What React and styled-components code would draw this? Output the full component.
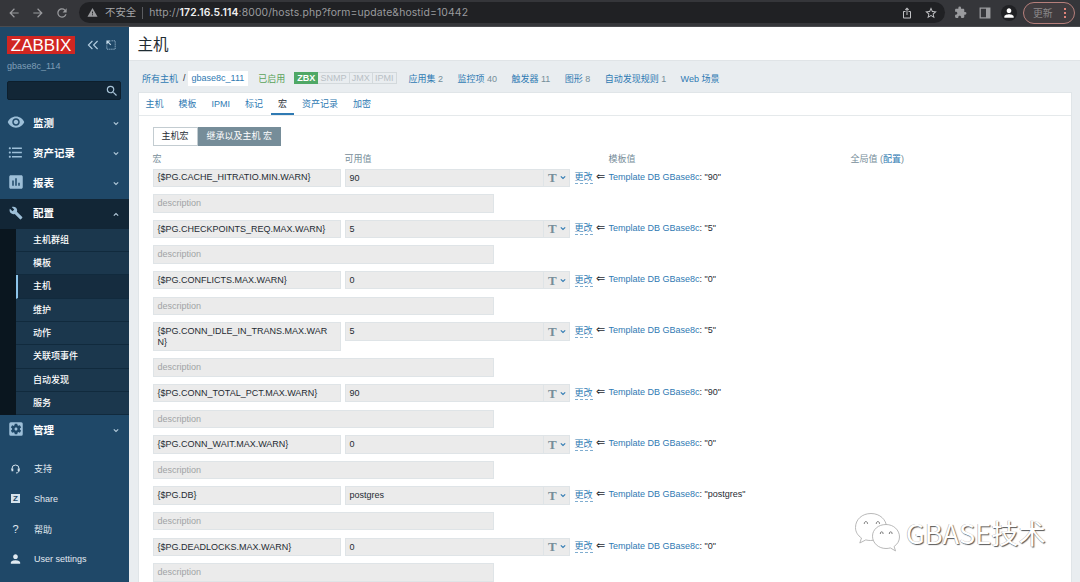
import React from 'react';
import styled, { createGlobalStyle } from 'styled-components';
import {
  MdArrowBack,
  MdArrowForward,
  MdAssessment,
  MdBuild,
  MdExtension,
  MdFormatListBulleted,
  MdIosShare,
  MdPerson,
  MdRefresh,
  MdSearch,
  MdSettingsApplications,
  MdStarBorder,
  MdVisibility,
  MdWarning,
} from 'react-icons/md';

const templateName = 'Template DB GBase8c';

const macros = [
  { name: '{$PG.CACHE_HITRATIO.MIN.WARN}', value: '90' },
  { name: '{$PG.CHECKPOINTS_REQ.MAX.WARN}', value: '5' },
  { name: '{$PG.CONFLICTS.MAX.WARN}', value: '0' },
  { name: '{$PG.CONN_IDLE_IN_TRANS.MAX.WARN}', value: '5' },
  { name: '{$PG.CONN_TOTAL_PCT.MAX.WARN}', value: '90' },
  { name: '{$PG.CONN_WAIT.MAX.WARN}', value: '0' },
  { name: '{$PG.DB}', value: 'postgres' },
  { name: '{$PG.DEADLOCKS.MAX.WARN}', value: '0' },
];

const submenu = ['主机群组', '模板', '主机', '维护', '动作', '关联项事件', '自动发现', '服务'];

const tabs = ['主机', '模板', 'IPMI', '标记', '宏', '资产记录', '加密'];

const counters = [
  { label: '应用集', count: 2 },
  { label: '监控项', count: 40 },
  { label: '触发器', count: 11 },
  { label: '图形', count: 8 },
  { label: '自动发现规则', count: 1 },
  { label: 'Web 场景' },
];

export default function App() {
  return (
    <>
      <GlobalStyle />
      <Window>
        <BrowserBar />
        <Body>
          <Sidebar />
          <Main>
            <PageHeader>主机</PageHeader>
            <HostNav />
            <Panel>
              <Tabs>
                {tabs.map((tab) => (
                  <Tab key={tab} $active={tab === '宏'}>
                    {tab}
                  </Tab>
                ))}
              </Tabs>
              <Segments>
                <Segment>主机宏</Segment>
                <Segment $active>继承以及主机 宏</Segment>
              </Segments>
              <MacroHead>
                <NameCol>宏</NameCol>
                <ValueHead>可用值</ValueHead>
                <TemplateHead>模板值</TemplateHead>
                <span>
                  全局值 (<Link>配置</Link>)
                </span>
              </MacroHead>
              {macros.map((macro) => (
                <MacroRow key={macro.name} {...macro} />
              ))}
            </Panel>
          </Main>
        </Body>
        <Watermark />
      </Window>
    </>
  );
}

function BrowserBar() {
  return (
    <Chrome>
      <NavButtons>
        <MdArrowBack />
        <MdArrowForward />
        <MdRefresh />
      </NavButtons>
      <AddressBar>
        <MdWarning size={11} />
        <Insecure>不安全</Insecure>
        <Url>
          http://<b>172.16.5.114</b>:8000/hosts.php?form=update&amp;hostid=10442
        </Url>
        <AddressIcons>
          <MdIosShare size={12} />
          <MdStarBorder size={14} />
        </AddressIcons>
      </AddressBar>
      <Extensions>
        <MdExtension size={13} />
        <svg width="12" height="12" viewBox="0 0 12 12">
          <path d="M1.2 1.2h9.6v9.6H1.2z" fill="none" stroke="#9a9b9e" strokeWidth="1.3" />
          <path d="M7 1h4v10H7z" fill="#9a9b9e" />
        </svg>
        <Avatar>
          <MdPerson size={14} />
        </Avatar>
      </Extensions>
      <UpdateButton>
        更新
        <Dots>
          <i />
          <i />
          <i />
        </Dots>
      </UpdateButton>
    </Chrome>
  );
}

function Sidebar() {
  return (
    <Aside>
      <LogoRow>
        <Logo>ZABBIX</Logo>
        <svg width="12" height="10" viewBox="0 0 12 10">
          <path d="M5.4 1 1.4 5l4 4M10.6 1l-4 4 4 4" fill="none" stroke="#b5cfe2" strokeWidth="1.1" />
        </svg>
        <svg width="10" height="10" viewBox="0 0 10 10">
          <path d="M5.5.8h3.7v8.4H.8V5.5" fill="none" stroke="#8cabc2" strokeWidth="1" strokeDasharray="1.4 .7" />
          <path d="M1 4.3V1h3.300M1.200 1.200l3.600 3.600" fill="none" stroke="#c6dbe9" strokeWidth="1.200" />
        </svg>
      </LogoRow>
      <ServerName>gbase8c_114</ServerName>
      <SearchBox>
        <MdSearch size={14} />
      </SearchBox>
      <MenuItem icon={<MdVisibility size={18} />} label="监测" />
      <MenuItem icon={<MdFormatListBulleted size={17} />} label="资产记录" />
      <MenuItem icon={<MdAssessment size={18} />} label="报表" />
      <MenuItem icon={<MdBuild size={14} />} label="配置" open />
      <Submenu>
        {submenu.map((item) => (
          <SubmenuItem key={item} $active={item === '主机'}>
            {item}
          </SubmenuItem>
        ))}
      </Submenu>
      <MenuItem icon={<MdSettingsApplications size={18} />} label="管理" />
      <UserMenu>
        <UserItem>
          <svg width="10" height="10" viewBox="0 0 10 10">
            <path d="M1.500 6V4.500a3.500 3.500 0 0 1 7 0V6c0 2-1 3-3 3" fill="none" stroke="#d5e3ed" />
            <path d="M1 4.500h1.800v2.800H1zM7.200 4.500H9v2.800H7.200z" fill="#d5e3ed" />
          </svg>
          支持
        </UserItem>
        <UserItem>
          <ShareIcon>Z</ShareIcon>
          Share
        </UserItem>
        <UserItem>
          <HelpIcon>?</HelpIcon>
          帮助
        </UserItem>
        <UserItem>
          <MdPerson size={14} />
          User settings
        </UserItem>
      </UserMenu>
    </Aside>
  );
}

function MenuItem({ icon, label, open }) {
  return (
    <StyledMenuItem $open={open}>
      <MenuIcon>{icon}</MenuIcon>
      {label}
      <Chevron up={open} color="#b4cbdb" />
    </StyledMenuItem>
  );
}

function Chevron({ up, color }) {
  return (
    <svg width="6" height="5" viewBox="0 0 6 5">
      <path d={up ? 'M.8 3.700 3 1.500l2.200 2.200' : 'M.8 1.300 3 3.500l2.200-2.200'} fill="none" stroke={color} strokeWidth="1.100" />
    </svg>
  );
}

function HostNav() {
  return (
    <StyledHostNav>
      <Link>所有主机</Link>
      <Slash>/</Slash>
      <CurrentHost>gbase8c_111</CurrentHost>
      <Enabled>已启用</Enabled>
      <Badges>
        <Badge $on>ZBX</Badge>
        <Badge>SNMP</Badge>
        <Badge>JMX</Badge>
        <Badge>IPMI</Badge>
      </Badges>
      <Counters>
        {counters.map(({ label, count }) => (
          <span key={label}>
            <Link>{label}</Link> {count}
          </span>
        ))}
      </Counters>
    </StyledHostNav>
  );
}

function MacroRow({ name, value }) {
  return (
    <StyledMacroRow>
      <MacroLine>
        <NameCol>
          <Field>{name}</Field>
        </NameCol>
        <ValueField>
          <span>{value}</span>
          <TypeButton>
            T
            <Chevron color="#2f7ab3" />
          </TypeButton>
        </ValueField>
        <ChangeLink>更改</ChangeLink>
        <Arrow>⇐</Arrow>
        <TemplateValue>
          <Link>{templateName}</Link>: "{value}"
        </TemplateValue>
      </MacroLine>
      <Description>description</Description>
    </StyledMacroRow>
  );
}

function Watermark() {
  return (
    <StyledWatermark>
      <svg width="48" height="42" viewBox="0 0 48 42">
        <g fill="#fff" stroke="#a6a6a6" strokeWidth=".8">
          <path d="M17 2.500C8 2.500 1.500 8.500 1.500 16.500c0 4.500 2.300 8 6 10.500l-1.700 5 6-3.100c1.500.4 3 .6 4.700.6 9 0 16-6 16-13.300S26 2.500 17 2.500z" />
          <path d="M32 13.500c-7.600 0-13.500 5-13.500 11.700S24.400 37.500 32 37.500c1.600 0 3-.2 4.300-.6l5.200 3-1.400-4.400c3.200-2.200 5.400-5.500 5.400-9.500 0-7-5.900-12.500-13.500-12.500z" />
        </g>
        <g fill="none" stroke="#777" strokeWidth="1">
          <path d="M10.500 13a1.600 1.600 0 1 1 2.800 0M22.500 13a1.600 1.600 0 1 1 2.800 0" />
          <path d="M26.500 23a1.400 1.400 0 1 1 2.400 0M35.500 23a1.400 1.400 0 1 1 2.400 0" />
        </g>
      </svg>
      GBASE技术
    </StyledWatermark>
  );
}

const GlobalStyle = createGlobalStyle`
  * {
    box-sizing: border-box;
  }
  body {
    margin: 0;
    overflow: hidden;
    font-family: 'Liberation Sans', 'Noto Sans CJK SC', sans-serif;
    font-size: 9px;
    color: #1f2c33;
  }
  svg {
    flex: none;
    display: block;
  }
`;

const Window = styled.div`
  position: relative;
  display: flex;
  flex-direction: column;
  width: 1080px;
  height: 582px;
  overflow: hidden;
`;

const Chrome = styled.header`
  display: flex;
  align-items: center;
  flex: none;
  height: 27px;
  padding: 0 5px 1px 7px;
  background: #35363a;
  border-bottom: 1px solid #4a4b4f;
  color: #9a9b9e;
`;

const NavButtons = styled.div`
  display: flex;
  gap: 10px;
  width: 72px;
  font-size: 14px;
`;

const AddressBar = styled.div`
  display: flex;
  align-items: center;
  width: 866px;
  height: 21px;
  padding: 0 7px 0 8px;
  border-radius: 11px;
  background: #202124;
`;

const Insecure = styled.span`
  margin-left: 7px;
  padding-right: 6px;
  border-right: 1px solid #5b5c60;
  font-size: 10.4px;
  line-height: 12px;
  color: #a5a6a9;
`;

const Url = styled.span`
  margin-left: 6px;
  font-family: Inter, sans-serif;
  font-size: 10.4px;
  letter-spacing: 0.12px;
  white-space: nowrap;
  b {
    font-weight: 600;
    color: #f0f0f1;
  }
`;

const AddressIcons = styled.div`
  display: flex;
  align-items: center;
  gap: 11px;
  margin-left: auto;
  color: #c1c2c5;
`;

const Extensions = styled.div`
  display: flex;
  align-items: center;
  gap: 12px;
  margin-left: 9px;
`;

const Avatar = styled.span`
  display: flex;
  align-items: center;
  justify-content: center;
  width: 16px;
  height: 16px;
  margin-left: -2px;
  border-radius: 50%;
  background: #202124;
  color: #fff;
`;

const UpdateButton = styled.span`
  display: flex;
  align-items: center;
  justify-content: space-between;
  width: 52px;
  height: 22px;
  margin-left: auto;
  padding: 0 8px 0 9px;
  border: 1px solid #b67f7b;
  border-radius: 11px;
  background: #413c3f;
  font-size: 9.8px;
  color: #8d8a8c;
`;

const Dots = styled.span`
  display: flex;
  flex-direction: column;
  gap: 2px;
  i {
    width: 2px;
    height: 2px;
    background: #e0837a;
  }
`;

const Body = styled.div`
  display: flex;
  flex: 1;
  min-height: 0;
`;

const Aside = styled.aside`
  flex: none;
  width: 129px;
  background: #1f4868;
  color: #fff;
`;

const LogoRow = styled.div`
  display: flex;
  align-items: center;
  height: 18px;
  margin: 9px 0 0 7px;
  svg + svg {
    margin-left: 7px;
  }
`;

const Logo = styled.span`
  width: 68px;
  height: 18px;
  margin-right: 12px;
  background: #d02622;
  font-size: 17px;
  line-height: 19px;
  text-align: center;
`;

const ServerName = styled.div`
  height: 27px;
  padding: 6px 7px 0;
  line-height: 12px;
  color: #7f9fb7;
`;

const SearchBox = styled.div`
  display: flex;
  align-items: center;
  justify-content: flex-end;
  width: 113.5px;
  height: 19px;
  margin: 0 0 8px 7px;
  padding-right: 1px;
  border: 1px solid #0d1f2d;
  border-radius: 2px;
  background: #122636;
  color: #a9c4d8;
`;

const StyledMenuItem = styled.div`
  display: flex;
  align-items: center;
  height: 30.2px;
  padding: 0 10px 2px 0;
  background: ${({ $open }) => ($open ? '#122636' : 'transparent')};
  font-size: 10.5px;
  font-weight: 700;
  > svg {
    margin: 3px 0 0 auto;
  }
`;

const MenuIcon = styled.span`
  display: flex;
  justify-content: center;
  width: 31px;
  margin-right: 2px;
  color: #9dbfd8;
`;

const Submenu = styled.div`
  border-left: 16px solid #0a161f;
`;

const SubmenuItem = styled.div`
  height: 23.3px;
  padding-left: ${({ $active }) => ($active ? 15 : 17)}px;
  border-bottom: 1px solid #112a3d;
  border-left: ${({ $active }) => ($active ? '2px solid #8cc4ea' : 'none')};
  background: ${({ $active }) => ($active ? '#152c3f' : '#1b374d')};
  line-height: 23px;
  font-weight: 500;
`;

const UserMenu = styled.div`
  padding-top: 8.5px;
`;

const UserItem = styled.div`
  display: flex;
  align-items: center;
  height: 30.1px;
  color: #e1eaf1;
  > :first-child {
    width: 31px;
    margin-right: 3px;
  }
`;

const ShareIcon = styled.span`
  display: flex;
  justify-content: center;
  font-size: 8px;
  font-weight: 700;
  line-height: 9px;
  color: #1f4868;
  background: linear-gradient(#d5e3ed, #d5e3ed) center / 9px 9px no-repeat;
`;

const HelpIcon = styled.span`
  font-size: 11px;
  text-align: center;
`;

const Main = styled.main`
  display: flex;
  flex-direction: column;
  flex: 1;
  min-width: 0;
  background: #e9edf0;
`;

const PageHeader = styled.h1`
  flex: none;
  height: 34px;
  margin: 0;
  padding-left: 8.5px;
  background: #fff;
  border-bottom: 1px solid #e0e4e7;
  font-size: 15.5px;
  font-weight: 400;
  line-height: 35px;
`;

const Link = styled.a`
  color: #2f7ab3;
`;

const StyledHostNav = styled.nav`
  display: flex;
  align-items: center;
  flex: none;
  height: 31px;
  padding: 3px 0 0 13px;
  color: #768d99;
  white-space: nowrap;
`;

const Slash = styled.span`
  margin: 0 2px 0 5px;
  color: #1f2c33;
`;

const CurrentHost = styled.span`
  height: 15px;
  padding: 0 4px;
  background: #fff;
  line-height: 15px;
  color: #2f7ab3;
`;

const Enabled = styled.span`
  margin: 0 9px 0 10px;
  color: #59a35a;
`;

const Badges = styled.span`
  display: flex;
`;

const Badge = styled.span`
  height: 12px;
  padding: 0 2.1px;
  border: 1px solid ${({ $on }) => ($on ? '#4fa866' : '#d3d9dc')};
  border-left-width: ${({ $on }) => ($on ? 1 : 0)}px;
  background: ${({ $on }) => ($on ? '#4fa866' : 'transparent')};
  font-weight: ${({ $on }) => ($on ? 700 : 400)};
  color: ${({ $on }) => ($on ? '#fff' : '#b8c0c5')};
  line-height: 11px;
`;

const Counters = styled.span`
  display: flex;
  gap: 14.4px;
  margin-left: 12px;
`;

const Panel = styled.section`
  flex: 1;
  min-height: 0;
  margin: 0 8px 0 8.5px;
  border: 1px solid #e0e5e8;
  border-bottom: 0;
  background: #fff;
  overflow: hidden;
`;

const Tabs = styled.div`
  display: flex;
  height: 23px;
  border-bottom: 1px solid #e5e9eb;
`;

const Tab = styled.span`
  height: 22px;
  margin-right: 1px;
  padding: 0 7px;
  border-bottom: 2px solid ${({ $active }) => ($active ? '#2f7ab3' : 'transparent')};
  line-height: 22px;
  color: ${({ $active }) => ($active ? '#1f2c33' : '#2f7ab3')};
`;

const Segments = styled.div`
  display: flex;
  margin: 11px 0 0 14px;
`;

const Segment = styled.span`
  height: 19px;
  padding: 0 8px;
  border: 1px solid ${({ $active }) => ($active ? '#768d99' : '#c3ccd1')};
  background: ${({ $active }) => ($active ? '#768d99' : '#fff')};
  color: ${({ $active }) => ($active ? '#fff' : '#1f2c33')};
  line-height: 17px;
`;

const MacroHead = styled.div`
  display: flex;
  height: 22.6px;
  padding: 7px 0 0 14px;
  line-height: 13px;
  color: #768d99;
`;

const NameCol = styled.div`
  flex: none;
  width: 192px;
  padding-right: 4px;
`;

const ValueHead = styled.span`
  width: 264px;
`;

const TemplateHead = styled.span`
  width: 242px;
`;

const StyledMacroRow = styled.div`
  padding: 0 0 7.3px 14px;
`;

const MacroLine = styled.div`
  display: flex;
  align-items: flex-start;
`;

const Field = styled.div`
  min-height: 18.3px;
  padding: 2.9px 9px 2.9px 4px;
  border: 1px solid #dfe4e7;
  background: #ebebeb;
  line-height: 10.5px;
  overflow-wrap: anywhere;
`;

const ValueField = styled(Field)`
  display: flex;
  justify-content: space-between;
  width: 225.5px;
  height: 18.3px;
  padding: 0 0 0 4px;
  line-height: 17px;
`;

const TypeButton = styled.span`
  display: flex;
  align-items: center;
  justify-content: space-between;
  width: 26px;
  padding: 0 3px 0 4px;
  border-left: 1px solid #dfe4e7;
  font-family: 'Liberation Serif', serif;
  font-size: 13px;
  font-weight: 700;
  color: #768d99;
`;

const ChangeLink = styled.a`
  margin: 2.5px 0 0 4.5px;
  border-bottom: 1px dashed #7fadd0;
  line-height: 12px;
  color: #2f7ab3;
`;

const Arrow = styled.span`
  width: 16px;
  text-align: center;
  font-family: 'DejaVu Sans', sans-serif;
  font-size: 11px;
  line-height: 16px;
`;

const TemplateValue = styled.span`
  line-height: 17px;
`;

const Description = styled(Field)`
  width: 341px;
  margin-top: 7.35px;
  color: #a0a3a5;
`;

const StyledWatermark = styled.div`
  position: absolute;
  top: 511px;
  left: 854px;
  display: flex;
  align-items: center;
  gap: 4px;
  font-family: 'Noto Sans CJK SC', sans-serif;
  font-size: 27.2px;
  font-weight: 400;
  line-height: 42px;
  color: #fff;
  text-shadow: 1px 1px 1px #555, -0.5px -0.5px 0.5px #aaa;
  opacity: 0.98;
  white-space: nowrap;
`;
